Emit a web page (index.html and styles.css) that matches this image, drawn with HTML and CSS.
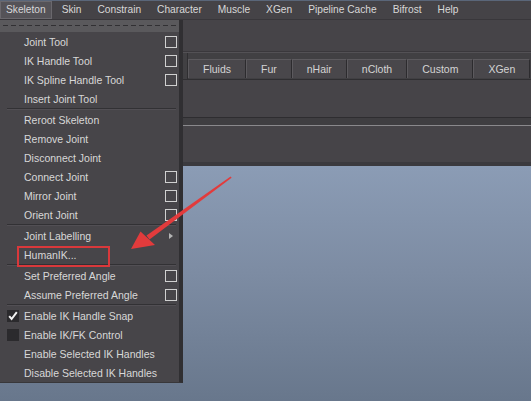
FILE: index.html
```html
<!DOCTYPE html>
<html lang="en">
<head>
<meta charset="utf-8">
<title>Maya - Skeleton menu</title>
<link rel="stylesheet" href="styles.css">
</head>
<body>
<div class="app">
  <nav class="menubar">
    <span class="mb-item active">Skeleton</span>
    <span class="mb-item">Skin</span>
    <span class="mb-item">Constrain</span>
    <span class="mb-item">Character</span>
    <span class="mb-item">Muscle</span>
    <span class="mb-item">XGen</span>
    <span class="mb-item">Pipeline Cache</span>
    <span class="mb-item">Bifrost</span>
    <span class="mb-item">Help</span>
  </nav>
  <div class="statusline"></div>
  <div class="shelf-tabs">
    <div class="shelf-side"></div>
    <div class="tabs">
      <span class="tab">Fluids</span>
      <span class="tab">Fur</span>
      <span class="tab">nHair</span>
      <span class="tab">nCloth</span>
      <span class="tab">Custom</span>
      <span class="tab">XGen</span>
    </div>
  </div>
  <div class="shelf"></div>
  <div class="shelf-rule"></div>
  <div class="panel-bar"></div>
  <div class="viewport"></div>
</div>

<div class="menu">
  <div class="tearoff"><span class="dash"></span></div>
  <div class="mi"><span class="lead"></span><span class="label">Joint Tool</span><span class="ob"></span></div>
  <div class="mi"><span class="lead"></span><span class="label">IK Handle Tool</span><span class="ob"></span></div>
  <div class="mi"><span class="lead"></span><span class="label">IK Spline Handle Tool</span><span class="ob"></span></div>
  <div class="mi"><span class="lead"></span><span class="label">Insert Joint Tool</span></div>
  <div class="sep"></div>
  <div class="mi"><span class="lead"></span><span class="label">Reroot Skeleton</span></div>
  <div class="mi"><span class="lead"></span><span class="label">Remove Joint</span></div>
  <div class="mi"><span class="lead"></span><span class="label">Disconnect Joint</span></div>
  <div class="mi"><span class="lead"></span><span class="label">Connect Joint</span><span class="ob"></span></div>
  <div class="mi"><span class="lead"></span><span class="label">Mirror Joint</span><span class="ob"></span></div>
  <div class="mi"><span class="lead"></span><span class="label">Orient Joint</span><span class="ob"></span></div>
  <div class="sep"></div>
  <div class="mi"><span class="lead"></span><span class="label">Joint Labelling</span><span class="sub"></span></div>
  <div class="mi"><span class="lead"></span><span class="label">HumanIK...</span></div>
  <div class="sep"></div>
  <div class="mi"><span class="lead"></span><span class="label">Set Preferred Angle</span><span class="ob"></span></div>
  <div class="mi"><span class="lead"></span><span class="label">Assume Preferred Angle</span><span class="ob"></span></div>
  <div class="sep"></div>
  <div class="mi"><span class="lead check"><svg viewBox="0 0 12 12" width="12" height="12"><polyline points="2.2,6.2 4.6,9 9.8,2.2" fill="none" stroke="#f2f2f2" stroke-width="2"/></svg></span><span class="label">Enable IK Handle Snap</span></div>
  <div class="mi"><span class="lead check"></span><span class="label">Enable IK/FK Control</span></div>
  <div class="mi"><span class="lead"></span><span class="label">Enable Selected IK Handles</span></div>
  <div class="mi"><span class="lead"></span><span class="label">Disable Selected IK Handles</span></div>
</div>

<div class="highlight"></div>
<svg class="annot" viewBox="0 0 531 401" width="531" height="401">
  <polygon points="230.6,176.4 231.6,177.8 149.5,239.5 146.5,235.5" fill="#e23b3c"/>
  <polygon points="131,249 140.5,231.5 155,245" fill="#e23b3c"/>
</svg>
</body>
</html>
```
FILE: styles.css
```css
* { box-sizing: border-box; margin: 0; padding: 0; }
html, body { width: 531px; height: 401px; overflow: hidden; }
body {
  position: relative;
  font-family: "Liberation Sans", Arial, sans-serif;
  font-size: 10.5px;
  color: #d8d8d8;
  background: #464448;
}
.app { display: flex; flex-direction: column; height: 401px; }

.menubar {
  height: 20px;
  flex: none;
  display: flex;
  align-items: center;
  font-size: 10.2px;
  background: #454347;
  border-top: 1px solid #5a6679;
  border-bottom: 1px solid #39373b;
}
.mb-item { padding: 0 8px; line-height: 16px; white-space: nowrap; }
.mb-item.active {
  padding: 0 5px;
  margin-right: 2px;
  border: 1px solid #6a686d;
  background: #555358;
}

.statusline {
  height: 32px;
  flex: none;
  background: #464448;
  border-bottom: 1px solid #3a383c;
}

.shelf-tabs {
  height: 28px;
  flex: none;
  display: flex;
  background: #414043;
  border-top: 1px solid #535155;
  border-bottom: 1px solid #2f2e31;
}
.shelf-side { width: 188px; border-right: 1px solid #2f2e31; }
.tabs { display: flex; align-items: flex-end; padding-bottom: 1px; }
.tab {
  height: 19px;
  display: flex;
  align-items: center;
  padding: 0 14px;
  background: #49474b;
  border-top: 1px solid #5c5a5e;
  border-left: 1px solid #5c5a5e;
  border-right: 1px solid #2c2b2e;
  color: #d4d4d4;
}

.shelf { height: 37px; flex: none; background: #464448; }
.shelf-rule {
  height: 9px;
  flex: none;
  background: #3f3e41;
  border-top: 1px solid #2e2d30;
  border-bottom: 1px solid #8a898c;
}
.panel-bar {
  height: 40px;
  flex: none;
  background: #464448;
  border-bottom: 4px solid #3b3a3e;
}
.viewport {
  flex: 1;
  background: linear-gradient(to bottom, #8b9cb5 0%, #7d8ca3 45%, #68778c 100%);
}

/* dropdown menu */
.menu {
  position: absolute;
  left: 0;
  top: 20px;
  width: 183px;
  background: #474549;
  border-right: 4px solid #302f32;
  border-bottom: 1px solid #38373a;
}
.tearoff {
  height: 12px;
  padding: 5px 1px 0 3px;
  background: #5a595c;
}
.dash {
  display: block;
  height: 1px;
  background: repeating-linear-gradient(90deg, #313033 0 5px, transparent 5px 8px);
}
.mi {
  height: 19px;
  display: flex;
  align-items: center;
  padding: 0 2px 0 7px;
  white-space: nowrap;
}
.lead { width: 12px; height: 12px; margin-right: 5px; flex: none; }
.lead.check { background: #2b2a2d; }
.lead svg { display: block; }
.label { flex: 1; }
.ob {
  width: 12px;
  height: 12px;
  flex: none;
  border: 1px solid #d0d0d0;
}
.sub {
  width: 12px;
  height: 12px;
  flex: none;
  display: flex;
  align-items: center;
  justify-content: center;
}
.sub::before {
  content: "";
  border-left: 4px solid #b4b4b4;
  border-top: 3px solid transparent;
  border-bottom: 3px solid transparent;
}
.sep {
  height: 2px;
  margin: 0 3px 0 7px;
  border-top: 1px solid #323134;
  border-bottom: 1px solid #524f54;
}

/* annotation overlays */
.highlight {
  position: absolute;
  left: 17px;
  top: 246px;
  width: 93px;
  height: 21px;
  border: 2px solid #d9383b;
}
.annot { position: absolute; left: 0; top: 0; pointer-events: none; }
```
